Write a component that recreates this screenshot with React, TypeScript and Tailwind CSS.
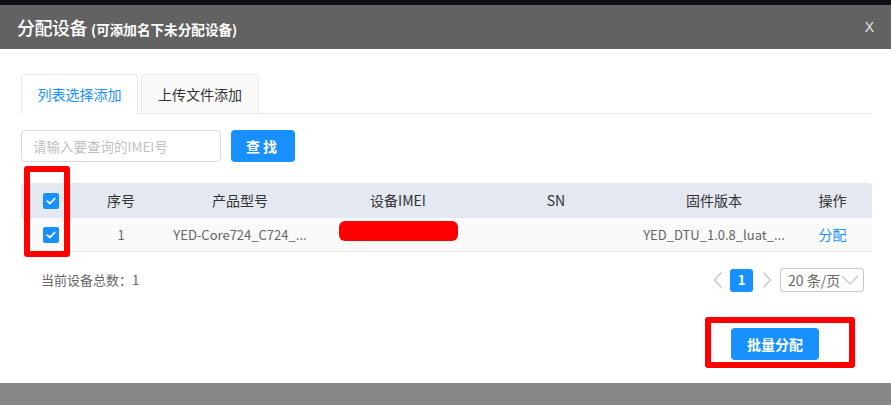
import React from "react";

const font = {
  fontFamily: '"Noto Sans CJK SC", "Noto Sans", sans-serif',
};

function Check() {
  return (
    <span className="inline-flex h-[16px] w-[16px] items-center justify-center rounded-[2px] bg-[#1890ff]">
      <svg width="10" height="8" viewBox="0 0 10 8">
        <path d="M1.3 4.1 L3.9 6.5 L8.7 1.5" fill="none" stroke="#fff" strokeWidth="1.8" strokeLinecap="round" strokeLinejoin="round" />
      </svg>
    </span>
  );
}

export default function App() {
  const cols = ["w-[60px]", "w-[80px]", "w-[158px]", "w-[158px]", "w-[158px]", "w-[158px]", "w-[79px]"];
  return (
    <div className="relative h-[405px] w-[891px] overflow-hidden bg-[#0e1013] pt-[5px]" style={font}>
      <div className="flex h-[44px] items-center justify-between bg-[#626262] pl-[17px] pr-[17px] text-white">
        <div className="flex items-baseline">
          <span className="text-[18px] font-medium tracking-[-0.5px]">分配设备</span>
          <span className="ml-[4px] text-[13.6px] font-bold">(可添加名下未分配设备)</span>
        </div>
        <span className="text-[14px] font-light text-[#e5e5e5]" style={{ fontFamily: '"Liberation Sans", sans-serif' }}>X</span>
      </div>

      <div className="h-[334px] bg-white pl-[21px] pr-[19px] pt-[25px]">
        <div className="flex h-[40px] gap-[3px] border-b border-[#e8e8e8]">
          <div className="-mb-px flex h-[40px] w-[117px] items-center justify-center rounded-t-[4px] border border-b-white border-[#e8e8e8] bg-white text-[14px] text-[#1890ff]">
            列表选择添加
          </div>
          <div className="flex h-[39px] w-[118px] items-center justify-center rounded-t-[4px] border border-b-0 border-[#e8e8e8] bg-[#fafafa] text-[14px] text-[#333]">
            上传文件添加
          </div>
        </div>

        <div className="mt-[16px] flex items-center">
          <div className="flex h-[32px] w-[200px] items-center rounded-[4px] border border-[#d9d9d9] pl-[11px] text-[13.5px] text-[#bfbfbf]">
            请输入要查询的IMEI号
          </div>
          <button className="ml-[10px] flex h-[32px] w-[64px] items-center justify-center rounded-[4px] bg-[#1890ff] text-[14px] font-bold tracking-[3px] text-white">
            查找
          </button>
        </div>

        <div className="mt-[21px] overflow-hidden rounded-t-[4px] border-b border-[#e8e8e8]">
          <div className="flex h-[35px] items-center bg-[#e3e8f1] text-[14px] text-[#333]">
            <div className={`${cols[0]} flex justify-center`}><Check /></div>
            <div className={`${cols[1]} text-center`}>序号</div>
            <div className={`${cols[2]} text-center`}>产品型号</div>
            <div className={`${cols[3]} text-center`}>设备IMEI</div>
            <div className={`${cols[4]} text-center`}>SN</div>
            <div className={`${cols[5]} text-center`}>固件版本</div>
            <div className={`${cols[6]} text-center`}>操作</div>
          </div>
          <div className="flex h-[33px] items-center bg-[#fafafa] text-[13px] text-[#666]">
            <div className={`${cols[0]} flex justify-center`}><Check /></div>
            <div className={`${cols[1]} text-center`}>1</div>
            <div className={`${cols[2]} text-center`}>YED-Core724_C724_...</div>
            <div className={`${cols[3]} flex justify-center`}>
              <div className="-mt-[7px] h-[20px] w-[119px] rounded-[6px] bg-[#ff0000]" />
            </div>
            <div className={`${cols[4]} text-center`}></div>
            <div className={`${cols[5]} text-center`}>YED_DTU_1.0.8_luat_...</div>
            <div className={`${cols[6]} text-center text-[14px] text-[#1890ff]`}>分配</div>
          </div>
        </div>

        <div className="mt-[16px] flex h-[24px] items-center justify-between pr-[8px]">
          <span className="pl-[20px] text-[13px] text-[#666]">当前设备总数：1</span>
          <div className="flex items-center">
            <svg width="10" height="18" viewBox="0 0 10 18">
              <path d="M8.5 1.5 L1.5 9 L8.5 16.5" fill="none" stroke="#c4c4c4" strokeWidth="1.3" />
            </svg>
            <span className="ml-[7px] flex h-[23px] w-[23px] items-center justify-center rounded-[3px] bg-[#1890ff] text-[13px] font-bold text-white">1</span>
            <svg width="10" height="18" viewBox="0 0 10 18" className="ml-[9px]">
              <path d="M1.5 1.5 L8.5 9 L1.5 16.5" fill="none" stroke="#c4c4c4" strokeWidth="1.3" />
            </svg>
            <div className="ml-[8px] flex h-[24px] w-[84px] items-center rounded-[3px] border border-[#c8c8c8] pl-[7px] text-[14px] text-[#666]">
              20 条/页
              <svg width="18" height="10" viewBox="0 0 18 10" className="ml-[1px]">
                <path d="M1 1 L9 9 L17 1" fill="none" stroke="#c4c4c4" strokeWidth="1.2" />
              </svg>
            </div>
          </div>
        </div>

        <div className="mt-[36px] flex justify-end pr-[53px]">
          <button className="flex h-[32px] w-[88px] items-center justify-center rounded-[4px] bg-[#1890ff] text-[14px] font-bold text-white">
            批量分配
          </button>
        </div>
      </div>
      <div className="h-[22px] bg-[#888888]" />

      <div className="absolute left-[24px] top-[166px] h-[91px] w-[46px] rounded-[3px] border-[6px] border-[#ff0000]" />
      <div className="absolute left-[705px] top-[317px] h-[51px] w-[150px] rounded-[3px] border-[6px] border-[#ff0000]" />
    </div>
  );
}
